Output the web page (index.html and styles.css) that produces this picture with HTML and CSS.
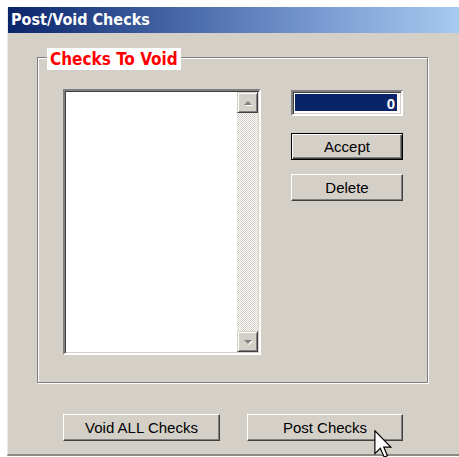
FILE: index.html
```html
<!DOCTYPE html>
<html lang="en">
<head>
<meta charset="utf-8">
<title>Post/Void Checks</title>
<link rel="stylesheet" href="styles.css">
</head>
<body>
<div class="window">
  <div class="titlebar">Post/Void Checks</div>
  <div class="content">
    <div class="groupbox">
      <span class="legend">Checks To Void</span>
      <div class="listbox">
        <div class="list-items"></div>
        <div class="scrollbar">
          <div class="sb-btn"><span class="arrow up"></span></div>
          <div class="sb-track"></div>
          <div class="sb-btn"><span class="arrow down"></span></div>
        </div>
      </div>
      <div class="side">
        <div class="field"><span class="field-value">0</span></div>
        <button class="btn btn-default btn-accept">Accept</button>
        <button class="btn btn-delete">Delete</button>
      </div>
    </div>
    <div class="actions">
      <button class="btn btn-voidall">Void ALL Checks</button>
      <button class="btn btn-post">Post Checks</button>
    </div>
  </div>
</div>
<svg class="cursor" width="18" height="28" viewBox="0 0 12 19">
  <path d="M0.5 0.5 L0.5 16 L4.2 12.4 L6.8 18.4 L9 17.5 L6.5 11.6 L11.3 11.6 Z" fill="#fff" stroke="#000" stroke-width="0.8" stroke-linejoin="miter"/>
</svg>
</body>
</html>
```

FILE: styles.css
```css
html, body {
  margin: 0;
  padding: 0;
  background: #fff;
}

body {
  width: 459px;
  height: 457px;
  overflow: hidden;
  position: relative;
  font-family: "Liberation Sans", Arial, sans-serif;
  font-size: 15px;
  color: #000;
}

.window {
  margin: 7px 0 0 7px;
  width: 452px;
  height: 449px;
  box-sizing: border-box;
  background: #d4d0c8;
  border-left: 1px solid #eceae6;
  border-bottom: 2px solid #8c8a86;
  display: flex;
  flex-direction: column;
}

.titlebar {
  height: 26px;
  line-height: 26px;
  padding-left: 3px;
  background: linear-gradient(to right, #0a246a 0%, #3a5a9c 30%, #7a9cd2 70%, #a6caf0 100%);
  color: #fff;
  font-family: "DejaVu Sans Condensed", "DejaVu Sans", sans-serif;
  font-weight: bold;
  font-size: 16px;
  white-space: nowrap;
}

.content {
  padding: 24px 0 0 29px;
}

/* etched group frame */
.groupbox {
  position: relative;
  width: 391px;
  height: 326px;
  box-sizing: border-box;
  border: 1px solid #808080;
  box-shadow: inset 1px 1px #fff, 1px 1px #fff;
  padding: 31px 0 0 25px;
  display: flex;
  gap: 30px;
}

.legend {
  position: absolute;
  top: -10px;
  left: 9px;
  height: 22px;
  line-height: 22px;
  padding: 0 3px;
  background: #fff;
  color: #ff0000;
  font-family: "DejaVu Sans Condensed", "DejaVu Sans", sans-serif;
  font-weight: bold;
  font-size: 17px;
  white-space: nowrap;
}

/* sunken list */
.listbox {
  width: 198px;
  height: 266px;
  box-sizing: border-box;
  background: #fff;
  border: 2px solid;
  border-color: #808080 #fff #fff #808080;
  box-shadow: inset 1px 1px #404040, inset -1px -1px #d4d0c8;
  display: flex;
  padding: 1px 1px 1px 1px;
}

.list-items {
  flex: 1;
}

.scrollbar {
  width: 21px;
  display: flex;
  flex-direction: column;
}

.sb-btn {
  height: 21px;
  box-sizing: border-box;
  background: #d4d0c8;
  border: 1px solid;
  border-color: #d4d0c8 #404040 #404040 #d4d0c8;
  box-shadow: inset 1px 1px #fff, inset -1px -1px #808080;
  display: flex;
  align-items: center;
  justify-content: center;
}

.sb-track {
  flex: 1;
  background: repeating-conic-gradient(#fff 0 25%, #d4d0c8 0 50%) 0 0 / 2px 2px;
}

.arrow {
  width: 0;
  height: 0;
  border-left: 4px solid transparent;
  border-right: 4px solid transparent;
  filter: drop-shadow(1px 1px 0 #fff);
}

.arrow.up {
  border-bottom: 4px solid #808080;
}

.arrow.down {
  border-top: 4px solid #808080;
}

.side {
  width: 112px;
  padding-top: 1px;
  display: flex;
  flex-direction: column;
}

.field {
  height: 26px;
  box-sizing: border-box;
  background: #fff;
  border: 2px solid;
  border-color: #808080 #fff #fff #808080;
  box-shadow: inset 1px 1px #404040, inset -1px -1px #d4d0c8;
  padding: 2px 4px 3px 2px;
  display: flex;
}

.field-value {
  flex: 1;
  background: #0a246a;
  color: #fff;
  text-align: right;
  line-height: 19px;
  padding-right: 2px;
  font-weight: bold;
}

/* raised push buttons */
.btn {
  height: 27px;
  box-sizing: border-box;
  margin: 0;
  padding: 0;
  background: #d4d0c8;
  font-family: "Liberation Sans", Arial, sans-serif;
  font-size: 15px;
  color: #000;
  border: 1px solid;
  border-color: #fff #404040 #404040 #fff;
  box-shadow: inset -1px -1px #808080;
  cursor: default;
}

.btn-default {
  border-color: #000;
  box-shadow: inset 1px 1px #fff, inset -1px -1px #404040, inset -2px -2px #808080;
}

.btn-accept {
  margin-top: 17px;
  width: 112px;
}

.btn-delete {
  margin-top: 14px;
  width: 112px;
}

.actions {
  display: flex;
  gap: 27px;
  margin: 31px 0 0 26px;
}

.btn-voidall {
  width: 157px;
}

.btn-post {
  width: 156px;
}

.cursor {
  position: absolute;
  left: 374px;
  top: 430px;
}
```
